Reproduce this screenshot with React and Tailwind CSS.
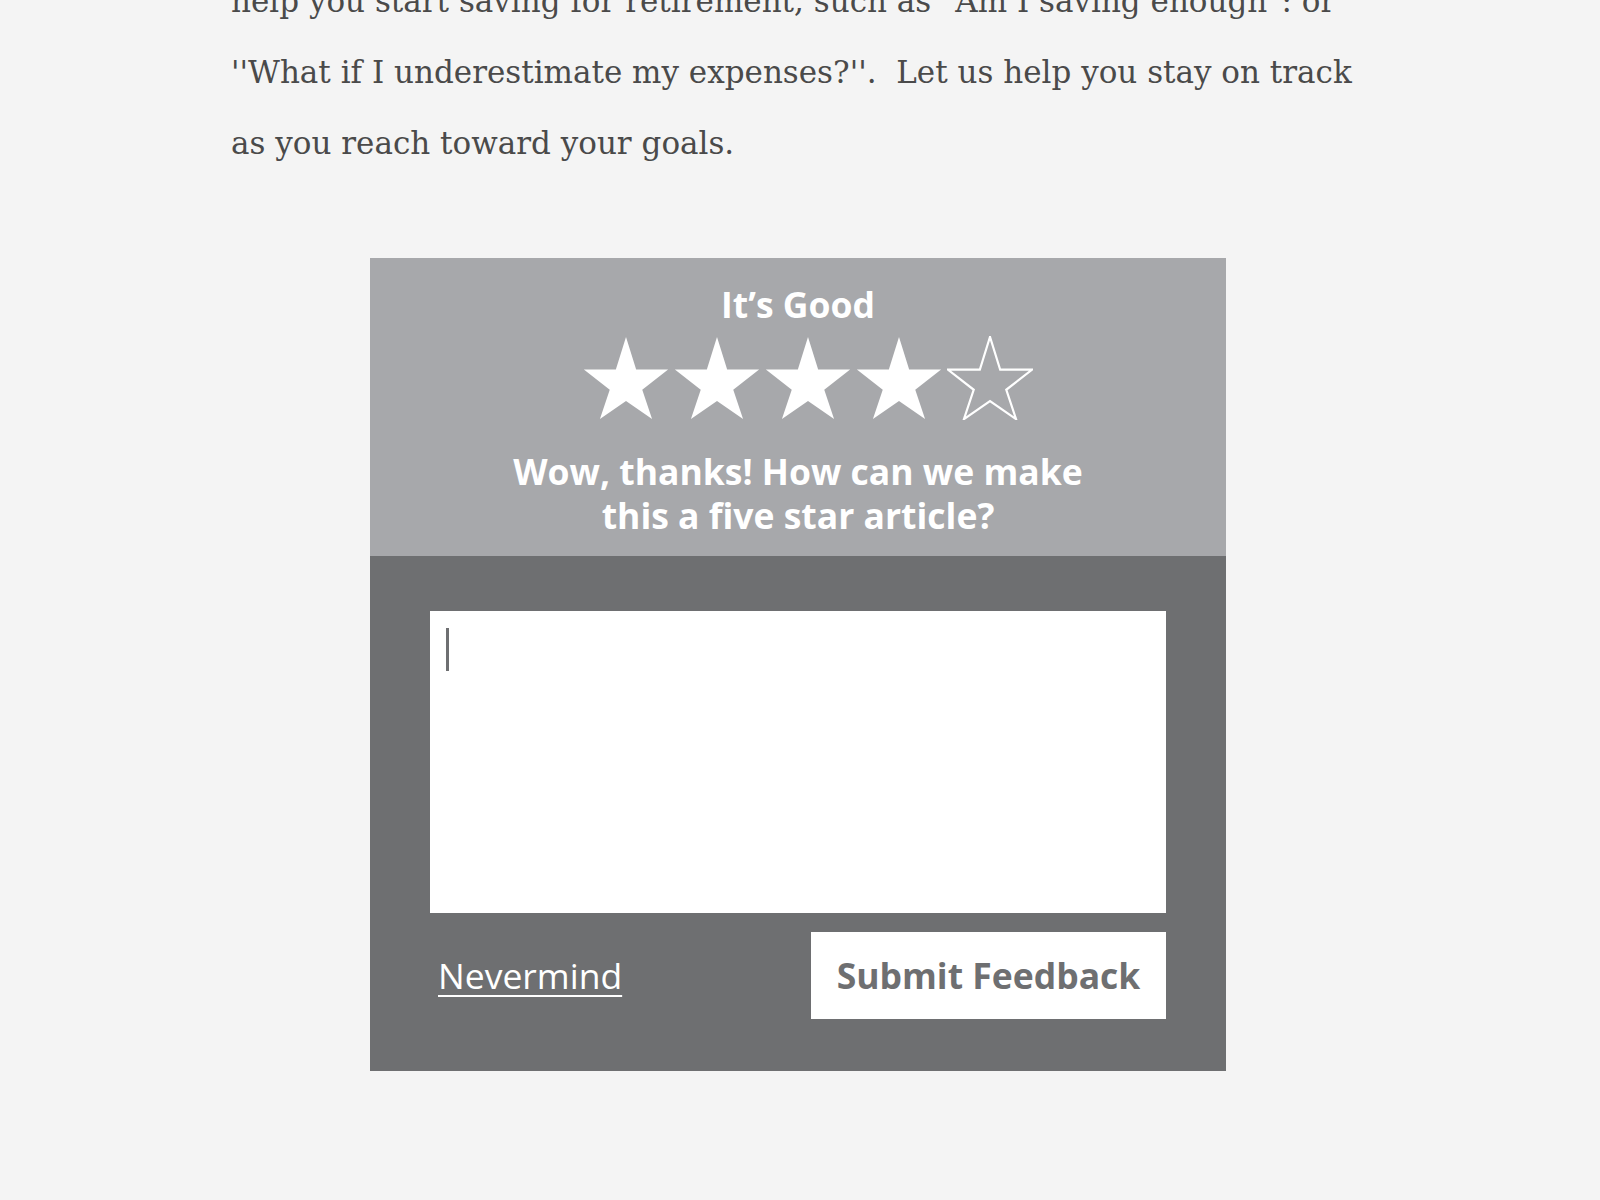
import { useState } from 'react';

function Star({ filled }) {
  return (
    <svg width="86" height="84" viewBox="0 1 100 93" preserveAspectRatio="none" className="block">
      <polygon
        points="50,2 61.8,38.2 99,38.2 68.9,60.5 80.3,93 50,73 19.7,93 31.1,60.5 1,38.2 38.2,38.2"
        fill={filled ? '#ffffff' : 'none'}
        stroke="#ffffff"
        strokeWidth={filled ? 0 : 2.5}
        strokeLinejoin="miter"
      />
    </svg>
  );
}

export default function App() {
  const [rating] = useState(4);

  return (
    <div className="min-h-[1200px] w-full bg-[#f4f4f4] overflow-hidden">
      {/* Article copy */}
      <div
        className="pl-[231px] -mt-[34px] text-[31px] leading-[71px] text-[#4a4a4a] whitespace-nowrap"
        style={{ fontFamily: '"DejaVu Serif", "Liberation Serif", serif' }}
      >
        <p>help you start saving for retirement, such as "Am I saving enough": or</p>
        <p>''What if I underestimate my expenses?''.&nbsp; Let us help you stay on track</p>
        <p>as you reach toward your goals.</p>
      </div>

      {/* Feedback widget */}
      <div
        className="mt-[79px] ml-[370px] w-[856px]"
        style={{ fontFamily: '"Open Sans", "Noto Sans", sans-serif' }}
      >
        <div className="bg-[#a7a8ab] h-[298px] flex flex-col items-center pt-[24px]">
          <h2 className="text-white font-bold text-[35.5px] leading-[44px]">It’s Good</h2>
          <div className="flex gap-[5px] mt-[10px] ml-[20px]">
            {[1, 2, 3, 4, 5].map((n) => (
              <Star key={n} filled={n <= rating} />
            ))}
          </div>
          <p className="mt-[29px] text-white font-bold text-[35.5px] leading-[44px] text-center">
            Wow, thanks! How can we make
            <br />
            this a five star article?
          </p>
        </div>

        <div className="bg-[#6e6f71] px-[60px] pt-[55px] pb-[52px]">
          <div className="bg-white h-[302px] pl-[16px] pt-[17px]">
            <div className="w-[3px] h-[43px] bg-[#6e6f71]" />
          </div>
          <div className="mt-[19px] flex items-center justify-between">
            <a className="text-white text-[35.5px] underline underline-offset-[6px] decoration-2 ml-[8px]">
              Nevermind
            </a>
            <button className="w-[355px] h-[87px] bg-white text-[#6e6f71] font-bold text-[35.5px]">
              Submit Feedback
            </button>
          </div>
        </div>
      </div>
    </div>
  );
}
